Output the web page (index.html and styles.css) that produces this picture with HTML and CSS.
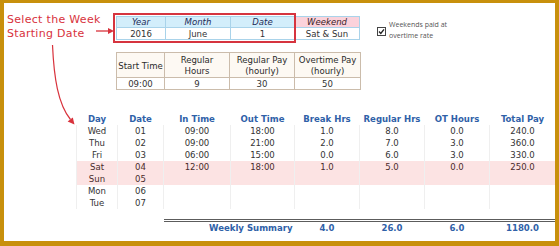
FILE: index.html
```html
<!DOCTYPE html>
<html>
<head>
<meta charset="utf-8">
<link rel="stylesheet" href="styles.css">
</head>
<body>
<div class="frame">
  <div class="head">
    <div class="callout">Select the Week<br>Starting Date</div>
    <div class="inputs">
      <div class="row1">
        <div class="picker">
          <table class="period">
            <colgroup><col class="c49"><col class="c65"><col class="c64"><col class="c65"></colgroup>
            <tr class="ph"><th>Year</th><th>Month</th><th>Date</th><th class="wkd">Weekend</th></tr>
            <tr class="pd"><td>2016</td><td>June</td><td>1</td><td>Sat &amp; Sun</td></tr>
          </table>
          <div class="redbox"></div>
        </div>
        <div class="note">
          <span class="check"><svg width="7" height="7" viewBox="0 0 7 7"><path d="M1 3.6 L2.8 5.4 L6 1.4" fill="none" stroke="#222" stroke-width="1.4"/></svg></span>
          <span class="notetext">Weekends paid at<br>overtime rate</span>
        </div>
      </div>
      <table class="rates">
        <colgroup><col class="c48"><col class="c65"><col class="c65"><col class="c66"></colgroup>
        <tr class="rh"><th>Start Time</th><th>Regular<br>Hours</th><th>Regular Pay<br>(hourly)</th><th>Overtime Pay<br>(hourly)</th></tr>
        <tr class="rd"><td>09:00</td><td>9</td><td>30</td><td>50</td></tr>
      </table>
    </div>
  </div>
  <table class="log">
    <colgroup><col class="c41"><col class="c46"><col class="c67"><col class="c64"><col class="c65"><col class="c65"><col class="c65"><col class="c66"></colgroup>
    <thead>
      <tr><th>Day</th><th>Date</th><th>In Time</th><th>Out Time</th><th>Break Hrs</th><th>Regular Hrs</th><th>OT Hours</th><th>Total Pay</th></tr>
    </thead>
    <tbody>
      <tr><td>Wed</td><td>01</td><td>09:00</td><td>18:00</td><td>1.0</td><td>8.0</td><td>0.0</td><td>240.0</td></tr>
      <tr><td>Thu</td><td>02</td><td>09:00</td><td>21:00</td><td>2.0</td><td>7.0</td><td>3.0</td><td>360.0</td></tr>
      <tr><td>Fri</td><td>03</td><td>06:00</td><td>15:00</td><td>0.0</td><td>6.0</td><td>3.0</td><td>330.0</td></tr>
      <tr class="wk"><td>Sat</td><td>04</td><td>12:00</td><td>18:00</td><td>1.0</td><td>5.0</td><td>0.0</td><td>250.0</td></tr>
      <tr class="wk"><td>Sun</td><td>05</td><td></td><td></td><td></td><td></td><td></td><td></td></tr>
      <tr><td>Mon</td><td>06</td><td></td><td></td><td></td><td></td><td></td><td></td></tr>
      <tr><td>Tue</td><td>07</td><td></td><td></td><td></td><td></td><td></td><td></td></tr>
    </tbody>
    <tfoot>
      <tr class="spacer"><td colspan="8"></td></tr>
      <tr class="sum"><td class="blank"></td><td class="blank"></td><td colspan="2" class="label">Weekly Summary</td><td>4.0</td><td>26.0</td><td>6.0</td><td>1180.0</td></tr>
    </tfoot>
  </table>
  <svg class="arrows" width="559" height="246" viewBox="0 0 559 246">
    <line x1="96" y1="31" x2="109" y2="31" stroke="#d8323c" stroke-width="1.3"/>
    <polygon points="108,28 114,31 108,34" fill="#d8323c"/>
    <path d="M52.5 45 C54 78 58 104 70.5 119.5" fill="none" stroke="#d8323c" stroke-width="1.2"/>
    <polygon points="67.6,121.6 72.8,117.4 74.5,124.5" fill="#d8323c"/>
  </svg>
</div>
</body>
</html>
```
FILE: styles.css
```css
html, body {
  margin: 0;
  padding: 0;
  background: #fff;
}

.frame {
  position: relative;
  width: 559px;
  height: 246px;
  box-sizing: border-box;
  border-style: solid;
  border-color: #c8900c;
  border-width: 3px 4px 5px 4px;
  background: #fff;
  font-family: "DejaVu Sans Condensed", "DejaVu Sans", sans-serif;
  font-stretch: condensed;
  font-size: 9.5px;
  color: #333;
  overflow: hidden;
}

.head {
  display: flex;
  padding-top: 10px;
}

.callout {
  width: 109px;
  padding-left: 3px;
  font-family: "DejaVu Sans", sans-serif;
  font-stretch: normal;
  font-size: 11px;
  line-height: 14px;
  color: #d8323c;
  letter-spacing: 0.3px;
}

.inputs {
  padding-top: 3px;
}

.row1 {
  display: flex;
  align-items: flex-start;
}

.picker {
  position: relative;
}

table {
  border-collapse: collapse;
  table-layout: fixed;
}

th, td {
  padding: 0;
  text-align: center;
  vertical-align: middle;
}

.c41 { width: 41px; }
.c46 { width: 46px; }
.c48 { width: 48px; }
.c49 { width: 49px; }
.c64 { width: 64px; }
.c65 { width: 65px; }
.c66 { width: 66px; }
.c67 { width: 67px; }

.period {
  width: 243px;
  line-height: 10px;
}

.period th, .period td {
  border: 1px solid #a9d3ea;
}

.period th {
  height: 10px;
  background: #d3eefb;
  font-style: italic;
  font-weight: normal;
  color: #1e2c58;
}

.period th.wkd {
  background: #fbd2db;
  color: #3a1e28;
}

.period td {
  height: 11px;
  color: #333;
}

.redbox {
  position: absolute;
  left: -3px;
  top: -3px;
  width: 183px;
  height: 30px;
  box-sizing: border-box;
  border: 2px solid #d6343f;
}

.note {
  display: flex;
  align-items: center;
  gap: 3px;
  margin: 3px 0 0 17px;
}

.check {
  width: 9px;
  height: 9px;
  box-sizing: border-box;
  border: 1px solid #444;
  display: flex;
  align-items: center;
  justify-content: center;
  margin-top: 2px;
}

.notetext {
  font-family: "Open Sans", sans-serif;
  font-stretch: normal;
  font-size: 7px;
  line-height: 11px;
  color: #555;
}

.rates {
  width: 244px;
  margin-top: 11px;
  line-height: 11px;
}

.rates th, .rates td {
  border: 1px solid #cbbcab;
}

.rates th {
  height: 24px;
  background: #fdf9f3;
  font-weight: normal;
  color: #2b2b2b;
}

.rates td {
  height: 11px;
}

.log {
  width: 479px;
  margin: 22px 0 0 72px;
  line-height: 12px;
}

.log th {
  height: 13px;
  font-weight: bold;
  color: #2f61a8;
}

.log tbody td {
  height: 12px;
  border-left: 1px solid #efefef;
  border-right: 1px solid #efefef;
  color: #333;
}

.log tr.wk td {
  background: #fce3e3;
  color: #4a2b2b;
}

.log .spacer td {
  height: 10px;
}

.log .sum td {
  height: 11px;
  border-top: 3px double #5c5c5c;
  font-weight: bold;
  color: #2f61a8;
}

.log .sum td.blank {
  border-top: none;
}

.log .sum td.label {
  text-align: right;
  padding-right: 2px;
}

.arrows {
  position: absolute;
  left: -4px;
  top: -3px;
  pointer-events: none;
}
```
